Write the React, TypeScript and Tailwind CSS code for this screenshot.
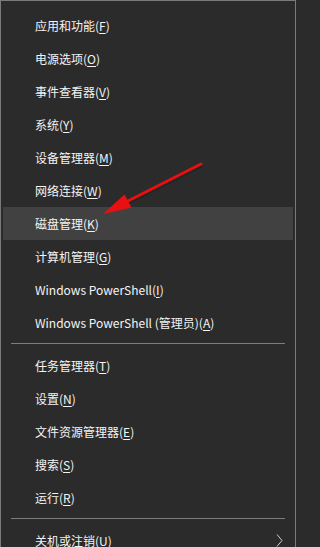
import React from 'react';

type Item = { label: string; key: string; active?: boolean; more?: boolean };

const groups: Item[][] = [
  [
    { label: '应用和功能', key: 'F' },
    { label: '电源选项', key: 'O' },
    { label: '事件查看器', key: 'V' },
    { label: '系统', key: 'Y' },
    { label: '设备管理器', key: 'M' },
    { label: '网络连接', key: 'W' },
    { label: '磁盘管理', key: 'K', active: true },
    { label: '计算机管理', key: 'G' },
    { label: 'Windows PowerShell', key: 'I' },
    { label: 'Windows PowerShell (管理员)', key: 'A' },
  ],
  [
    { label: '任务管理器', key: 'T' },
    { label: '设置', key: 'N' },
    { label: '文件资源管理器', key: 'E' },
    { label: '搜索', key: 'S' },
    { label: '运行', key: 'R' },
  ],
  [{ label: '关机或注销', key: 'U', more: true }],
];

function MenuRow({ item }: { item: Item }) {
  return (
    <div
      className={`relative mx-[2px] flex h-[33px] items-center pl-[32px] text-[12px] text-[#f4f4f4] ${
        item.active ? 'bg-[#414141]' : ''
      }`}
    >
      <span>
        {item.label}(<span className="underline underline-offset-2">{item.key}</span>)
      </span>
      {item.more && (
        <svg className="absolute right-[10px] top-[10px]" width="7" height="13" viewBox="0 0 7 13">
          <path d="M1 0.5 L6 6.5 L1 12.5" fill="none" stroke="#d0d0d0" strokeWidth="1" />
        </svg>
      )}
    </div>
  );
}

export default function App() {
  return (
    <div className="relative h-[547px] w-full min-w-[299px] overflow-hidden bg-[#2b2b2b] font-['Noto_Sans_CJK_SC',sans-serif]">
      <div className="h-[560px] w-[296px] border-l border-r border-t border-[#7a7a7a] bg-[#2b2b2b] pt-[8px]">
        {groups.map((g, gi) => (
          <div key={gi}>
            {gi > 0 && <div className="mx-[10px] mb-[5px] mt-[4px] h-px bg-[#7d7d7d]" />}
            {g.map((it) => (
              <MenuRow key={it.key} item={it} />
            ))}
          </div>
        ))}
      </div>
      {/* red annotation arrow */}
      <svg className="pointer-events-none absolute left-0 top-0" width="299" height="547">
        <line x1="201" y1="164" x2="124" y2="203" stroke="#1a1a1a" strokeOpacity="0.35" strokeWidth="3.5" transform="translate(1,1.5)" />
        <line x1="201" y1="164" x2="124" y2="203" stroke="#e81010" strokeWidth="3" strokeLinecap="round" />
        <polygon points="103,214 124.5,194.5 131.5,207.5" fill="#e81010" />
      </svg>
    </div>
  );
}
